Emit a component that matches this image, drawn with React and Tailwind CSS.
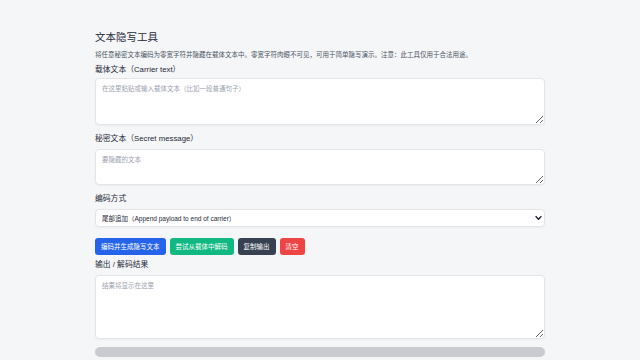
import { useState } from 'react'

const FONT = "font-['Liberation_Sans','Noto_Sans_CJK_SC',sans-serif]"

// small label above each field
function Label({ children, className = '' }) {
  return (
    <div className={`text-[7.8px] leading-[10px] text-[#1f2937] ${className}`}>{children}</div>
  )
}

function Field({ value, onChange, placeholder, height }) {
  return (
    <textarea
      value={value}
      onChange={(e) => onChange(e.target.value)}
      placeholder={placeholder}
      className={`mt-[5px] block w-full ${height} rounded-[4px] border border-[#e3e5e9] bg-white px-[6px] py-[5px] text-[6.5px] leading-[9px] text-[#1f2937] placeholder:text-[#9ca3af] shadow-[0_1px_2px_rgba(0,0,0,0.04)] outline-none`}
    />
  )
}

export default function App() {
  const [carrier, setCarrier] = useState('')
  const [secret, setSecret] = useState('')
  const [output, setOutput] = useState('')
  const [mode, setMode] = useState('append')

  const clearAll = () => {
    setCarrier('')
    setSecret('')
    setOutput('')
  }

  return (
    <div className={`min-h-[360px] w-full bg-[#f5f6f8] ${FONT}`}>
      <div className="mx-auto w-[450px] pt-[30px]">
        <h1 className="text-[10.5px] leading-[14px] text-[#1f2937]">文本隐写工具</h1>
        <p className="mt-[6px] text-[6.5px] leading-[9px] text-[#4b5563]">
          将任意秘密文本编码为零宽字符并隐藏在载体文本中。零宽字符肉眼不可见，可用于简单隐写演示。注意：此工具仅用于合法用途。
        </p>

        <Label className="mt-[6px]">载体文本（Carrier text）</Label>
        <div className="-mt-[2px]">
          <Field value={carrier} onChange={setCarrier} height="h-[47px]" placeholder="在这里粘贴或输入载体文本（比如一段普通句子）" />
        </div>

        <Label className="mt-[9px]">秘密文本（Secret message）</Label>
        <Field value={secret} onChange={setSecret} height="h-[36px]" placeholder="要隐藏的文本" />

        <Label className="mt-[9px]">编码方式</Label>
        <div className="relative mt-[5px]">
          <select
            value={mode}
            onChange={(e) => setMode(e.target.value)}
            className="block h-[18px] w-full appearance-none rounded-[4px] border border-[#e3e5e9] bg-white px-[6px] text-[6.5px] leading-[9px] text-[#1f2937] shadow-[0_1px_2px_rgba(0,0,0,0.04)] outline-none"
          >
            <option value="append">尾部追加（Append payload to end of carrier）</option>
            <option value="interleave">字符间插入（Interleave）</option>
          </select>
          <svg className="pointer-events-none absolute right-[3px] top-[6px] h-[6px] w-[7px]" viewBox="0 0 10 8">
            <path d="M1.5 2 L5 5.8 L8.5 2" fill="none" stroke="#111827" strokeWidth="2" strokeLinecap="round" strokeLinejoin="round" />
          </svg>
        </div>

        <div className="mt-[11px] flex gap-[4px]">
          <button className="h-[17px] rounded-[3px] bg-[#2563eb] px-[6px] text-[6.5px] text-white">编码并生成隐写文本</button>
          <button className="h-[17px] rounded-[3px] bg-[#10b981] px-[6px] text-[6.5px] text-white">尝试从载体中解码</button>
          <button className="h-[17px] rounded-[3px] bg-[#374151] px-[6px] text-[6.5px] text-white">复制输出</button>
          <button onClick={clearAll} className="h-[17px] rounded-[3px] bg-[#ef4444] px-[6px] text-[6.5px] text-white">清空</button>
        </div>

        <Label className="mt-[5px]">输出 / 解码结果</Label>
        <Field value={output} onChange={setOutput} height="h-[64px]" placeholder="结果将显示在这里" />

        <div className="mt-[8px] h-[10px] w-full rounded-full bg-[#c9cbd1]" />
      </div>
    </div>
  )
}
